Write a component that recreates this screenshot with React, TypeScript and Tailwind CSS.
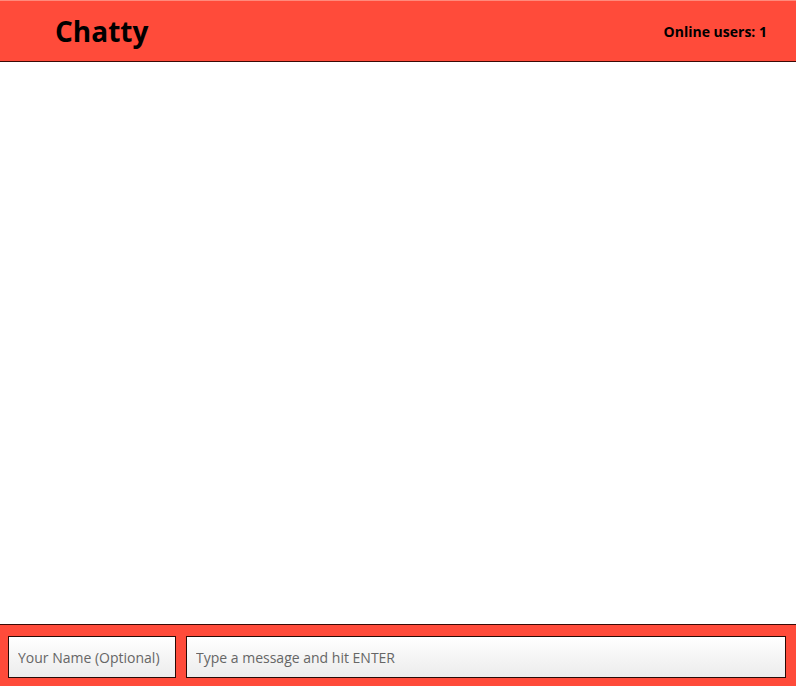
export default function App() {
  return (
    <div className="flex flex-col h-screen bg-white font-['Open_Sans',sans-serif] text-black">
      <nav className="flex items-center justify-between h-[62px] shrink-0 bg-[#ff4b3a] border-b border-[#3a0a06] border-t border-t-[#ff8a7c] pl-[55px] pr-[29px]">
        <h1 className="text-[28px] font-bold leading-none">Chatty</h1>
        <span className="text-[14px] font-bold">Online users: 1</span>
      </nav>

      {/* messages */}
      <main className="flex-1"></main>

      <footer className="flex gap-[10px] h-[62px] shrink-0 bg-[#ff4b3a] border-t border-[#3a0a06] pl-2 pr-[10px] pt-[11px]">
        <input
          type="text"
          placeholder="Your Name (Optional)"
          className="w-[168px] h-[42px] px-[9px] text-[14px] border border-[#2a0a06] bg-gradient-to-b from-white to-[#ececec] placeholder:text-[#666] focus:outline-none"
        />
        <input
          type="text"
          placeholder="Type a message and hit ENTER"
          className="flex-1 h-[42px] px-[9px] text-[14px] border border-[#2a0a06] bg-gradient-to-b from-white to-[#ececec] placeholder:text-[#666] focus:outline-none"
        />
      </footer>
    </div>
  );
}
